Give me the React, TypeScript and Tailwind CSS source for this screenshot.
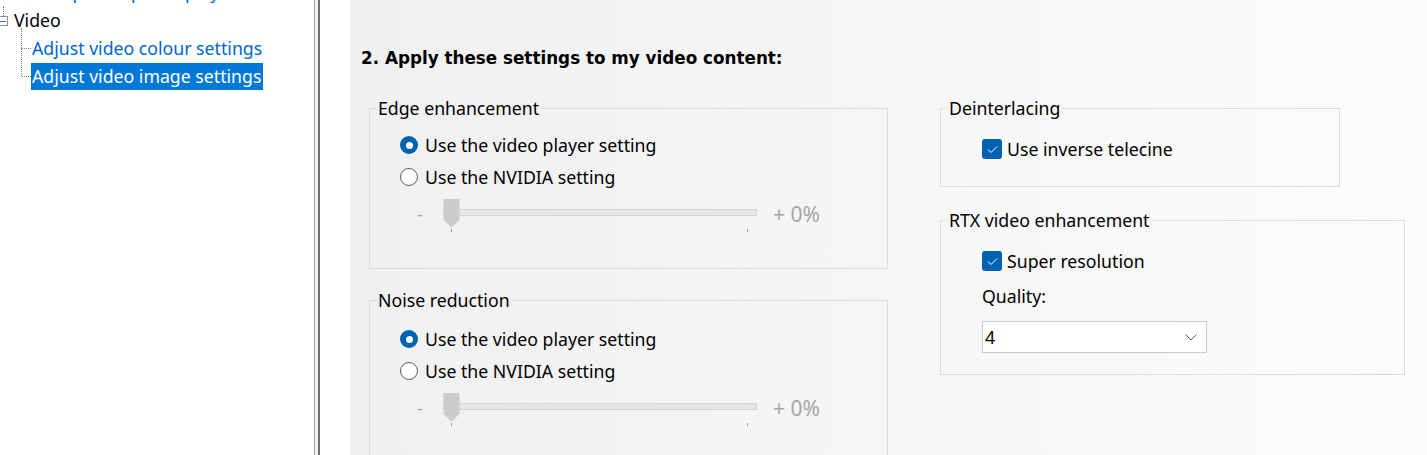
import React from "react";

const F = { fontFamily: '"Noto Sans", "Open Sans", sans-serif' };
const H = { fontFamily: '"DejaVu Sans", "Noto Sans", sans-serif' };

function Radio({ checked, label }: { checked?: boolean; label: string }) {
  return (
    <div className="flex items-center h-[32px]">
      {checked ? (
        <span className="w-[18px] h-[18px] rounded-full bg-[#0063b1] flex items-center justify-center">
          <span className="w-[7px] h-[7px] rounded-full bg-white" />
        </span>
      ) : (
        <span className="w-[18px] h-[18px] rounded-full border border-[#5c5c5c] bg-white" />
      )}
      <span className="ml-[7px] text-[17.7px] leading-[22px] text-black">{label}</span>
    </div>
  );
}

function Check({ label }: { label: string }) {
  return (
    <div className="flex items-center h-[32px]">
      <span className="w-[20px] h-[20px] rounded-[3px] bg-[#0063b1] flex items-center justify-center">
        <svg width="11" height="9" viewBox="0 0 11 9" fill="none">
          <path d="M1 4.5 L4 7.5 L10 1.5" stroke="white" strokeWidth="1" />
        </svg>
      </span>
      <span className="ml-[5px] text-[17.7px] leading-[22px] text-black">{label}</span>
    </div>
  );
}

function Slider() {
  return (
    <div className="flex items-start h-[40px] pl-[17px] pt-[6px] text-[#a6a6a6]">
      <span className="w-[26px] text-[17.7px] leading-[22px] mt-[4px]">-</span>
      <div className="relative w-[314px] h-[34px]">
        <div className="absolute left-0 right-0 top-[10px] h-[7px] bg-[#e6e6e6] border border-[#d4d4d4]" />
        <svg className="absolute left-0 top-0" width="17" height="29" viewBox="0 0 17 29">
          <path d="M0.5 0 H16.5 V21 L8.5 28.5 L0.5 21 Z" fill="#cccccc" />
        </svg>
        <div className="absolute left-[8px] top-[30px] w-px h-[3px] bg-[#a0a0a0]" />
        <div className="absolute left-[304px] top-[30px] w-px h-[3px] bg-[#a0a0a0]" />
      </div>
      <span className="ml-[16px] text-[21px] leading-[24px] mt-[3px] whitespace-nowrap">+ 0%</span>
    </div>
  );
}

export default function App() {
  return (
    <div style={F} className="w-[1427px] h-[455px] overflow-hidden flex bg-white">
      {/* Tree panel */}
      <div className="w-[314px] h-full bg-white relative text-[17.7px] leading-[22px]">
        <div className="pl-[31px] -mt-[22px] h-[28px] flex items-center text-[#0066cc]">Set up multiple displays</div>
        <div className="flex items-center h-[28px]">
          <div className="relative w-[14px] h-[28px]">
            <div className="absolute left-[3px] top-0 h-[10px] border-l border-dotted border-[#808080]" />
            <div className="absolute left-[-2px] top-[10px] w-[10px] h-[10px] border border-[#919191] bg-white flex items-center justify-center">
              <div className="w-[6px] h-px bg-[#3c6ea8]" />
            </div>
          </div>
          <span className="text-black">Video</span>
        </div>
        <div className="relative">
          <div className="absolute left-[21px] top-[-6px] h-[20px] border-l border-dotted border-[#808080]" />
          <div className="absolute left-[21px] top-[14px] h-[28px] border-l border-dotted border-[#808080]" />
          <div className="flex items-center h-[28px]">
            <div className="w-[22px]" />
            <div className="w-[9px] border-t border-dotted border-[#808080]" />
            <span className="text-[#0066cc] px-[1px]">Adjust video colour settings</span>
          </div>
          <div className="flex items-center h-[28px]">
            <div className="w-[22px]" />
            <div className="w-[9px] border-t border-dotted border-[#808080]" />
            <span className="bg-[#0078d7] text-white h-[27px] flex items-center pl-[1px] pr-[2px]">Adjust video image settings</span>
          </div>
        </div>
      </div>
      {/* splitter */}
      <div className="w-[1px] h-full bg-[#a0a0a0]" />
      <div className="w-[3px] h-full bg-[#f0f0f0]" />
      <div className="w-[2px] h-full bg-[#6d6d6d]" />
      <div className="w-[30px] h-full bg-white" />
      {/* Content */}
      <div className="flex-1 h-full bg-gradient-to-r from-[#f0f0f0] to-[#fcfcfc] pl-[11px] pt-[47px]">
        <div style={H} className="text-[16.8px] font-bold leading-[23px] text-black">2. Apply these settings to my video content:</div>
        <div className="flex mt-[27px] pl-[8px] items-start">
          <div className="w-[519px] flex flex-col gap-[20px]">
            <fieldset className="border border-[#dcdcdc] h-[172px] px-[6px]">
              <legend className="px-[2px] text-[17.7px] leading-[22px] text-black">Edge enhancement</legend>
              <div className="pl-[24px] pt-[10px]">
                <Radio checked label="Use the video player setting" />
                <Radio label="Use the NVIDIA setting" />
                <Slider />
              </div>
            </fieldset>
            <fieldset className="border border-[#dcdcdc] h-[200px] px-[6px]">
              <legend className="px-[2px] text-[17.7px] leading-[22px] text-black">Noise reduction</legend>
              <div className="pl-[24px] pt-[12px]">
                <Radio checked label="Use the video player setting" />
                <Radio label="Use the NVIDIA setting" />
                <Slider />
              </div>
            </fieldset>
          </div>
          <div className="ml-[52px] flex flex-col gap-[22px]">
            <fieldset className="border border-[#dcdcdc] w-[400px] h-[90px] px-[6px]">
              <legend className="px-[2px] text-[17.7px] leading-[22px] text-black">Deinterlacing</legend>
              <div className="pl-[35px] pt-[14px]">
                <Check label="Use inverse telecine" />
              </div>
            </fieldset>
            <fieldset className="border border-[#dcdcdc] w-[465px] h-[166px] px-[6px]">
              <legend className="px-[2px] text-[17.7px] leading-[22px] text-black">RTX video enhancement</legend>
              <div className="pl-[35px] pt-[14px]">
                <Check label="Super resolution" />
                <div className="h-[30px] mt-[4px] flex items-center text-[17.7px] text-black">Quality:</div>
                <div className="mt-[10px] w-[225px] h-[32px] bg-white border border-[#c8c8c8] flex items-center justify-between pl-[2px] pr-[9px]">
                  <span className="text-[17.7px] text-black">4</span>
                  <svg width="12" height="7" viewBox="0 0 12 7" fill="none">
                    <path d="M0.5 0.5 L6 6 L11.5 0.5" stroke="#555" strokeWidth="1" />
                  </svg>
                </div>
              </div>
            </fieldset>
          </div>
        </div>
      </div>
    </div>
  );
}
